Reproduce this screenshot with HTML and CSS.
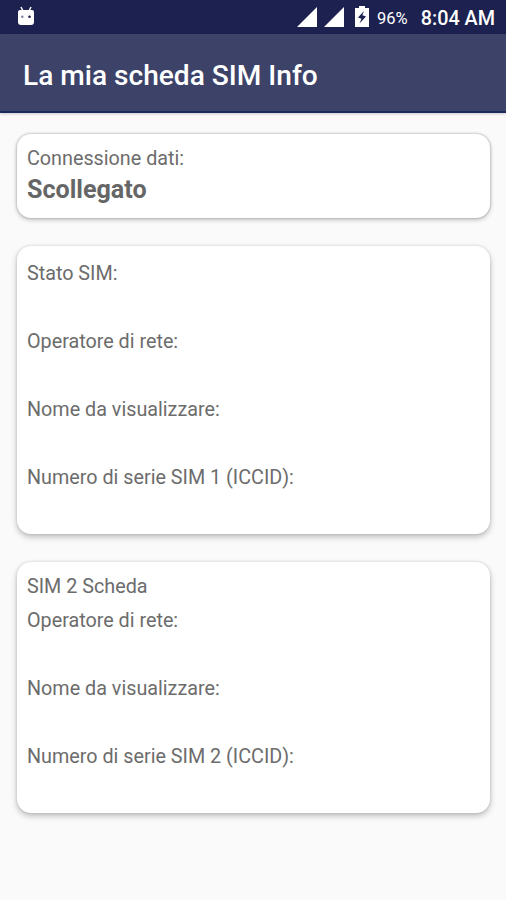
FILE: index.html
```html
<!DOCTYPE html>
<html lang="it">
<head>
    <meta charset="UTF-8">
    <meta name="viewport" content="width=device-width, initial-scale=1.0">
    <title>La mia scheda SIM Info</title>
    <link rel="stylesheet" href="styles.css">
</head>
<body>
    <div class="status-bar">
        <svg class="icon-android" width="18" height="20" viewBox="0 0 18 20">
            <path d="M4 1l2 4M14 1l-2 4" stroke="#fff" stroke-width="1.5" fill="none"/>
            <path d="M1 6q0-2 2-2h12q2 0 2 2v10q0 3-3 3H4q-3 0-3-3z" fill="#fff"/>
            <circle cx="5.3" cy="10.8" r="1.2" fill="#7b7f9f"/>
            <circle cx="12.5" cy="10.8" r="1.3" fill="#1c2150"/>
        </svg>
        <div class="status-right">
            <svg class="icon-signal" width="20" height="20" viewBox="0 0 20 20"><path d="M0 20L20 0v20z" fill="#fff"/></svg>
            <svg class="icon-signal" width="20" height="20" viewBox="0 0 20 20"><path d="M0 20L20 0v20z" fill="#fff"/></svg>
            <svg class="icon-battery" width="14" height="21" viewBox="0 0 14 21">
                <path d="M4 0h6v2h4v19H0V2h4z" fill="#fff"/>
                <path d="M9 5L3 11.5l3.5 1.2L4.5 17.5l6.5-7-3.7-1.2z" fill="#1c2150"/>
            </svg>
            <span class="battery-level">96%</span>
            <span class="clock">8:04 AM</span>
        </div>
    </div>
    <div class="toolbar">
        <h1>La mia scheda SIM Info</h1>
    </div>
    <div class="container">
        <div class="card card-data">
            <div class="label">Connessione dati:</div>
            <div class="status">Scollegato</div>
        </div>
        <div class="card card-sim1">
            <div class="row">Stato SIM:</div>
            <div class="row"></div>
            <div class="row">Operatore di rete:</div>
            <div class="row"></div>
            <div class="row">Nome da visualizzare:</div>
            <div class="row"></div>
            <div class="row">Numero di serie SIM 1 (ICCID):</div>
            <div class="row"></div>
        </div>
        <div class="card card-sim2">
            <div class="row">SIM 2 Scheda</div>
            <div class="row">Operatore di rete:</div>
            <div class="row"></div>
            <div class="row">Nome da visualizzare:</div>
            <div class="row"></div>
            <div class="row">Numero di serie SIM 2 (ICCID):</div>
            <div class="row"></div>
        </div>
    </div>
</body>
</html>
```
FILE: styles.css
```css
* {
    box-sizing: border-box;
}
body {
    font-family: Roboto, sans-serif;
    margin: 0;
    min-height: 100vh;
    background-color: #fafafa;
    color: #6c6c6c;
}
.status-bar {
    display: flex;
    justify-content: space-between;
    height: 34px;
    padding: 6px 11px 0 17px;
    background-color: #1c2150;
    color: #fff;
}
.status-right {
    display: flex;
    align-items: flex-start;
}
.icon-signal {
    margin-top: 1px;
    margin-right: 7px;
}
.icon-battery {
    margin-left: 4px;
}
.battery-level {
    margin-left: 8px;
    font-size: 16.5px;
    line-height: 25px;
}
.clock {
    margin-left: 13px;
    font-size: 19.8px;
    font-weight: 500;
    line-height: 25px;
}
.toolbar {
    display: flex;
    align-items: center;
    height: 79px;
    padding: 5px 23px 0;
    background-color: #3d4368;
    border-bottom: 2px solid #1d2a5e;
    box-shadow: 0 1px 3px rgba(0, 0, 0, 0.2);
}
.toolbar h1 {
    margin: 0;
    color: #fff;
    font-size: 28.1px;
    font-weight: 500;
}
.container {
    display: flex;
    flex-direction: column;
    gap: 28px;
    padding: 21px 16px 0 17px;
}
.card {
    padding-left: 10px;
    border-radius: 14px;
    background-color: #fff;
    box-shadow: 0 3px 6px rgba(0, 0, 0, 0.24), 0 0 3px rgba(0, 0, 0, 0.14);
    font-size: 19.75px;
}
.card-data {
    height: 84px;
    padding-top: 10px;
    box-shadow: 0 2px 5px rgba(0, 0, 0, 0.2), 0 0 3px rgba(0, 0, 0, 0.3);
}
.card-sim1 {
    height: 288px;
    padding-top: 11px;
}
.card-sim2 {
    height: 251px;
    padding-top: 8px;
}
.label {
    line-height: 30px;
}
.status {
    color: #666;
    font-size: 25.1px;
    font-weight: 700;
    line-height: 32px;
}
.row {
    height: 34px;
    line-height: 34px;
}
```
